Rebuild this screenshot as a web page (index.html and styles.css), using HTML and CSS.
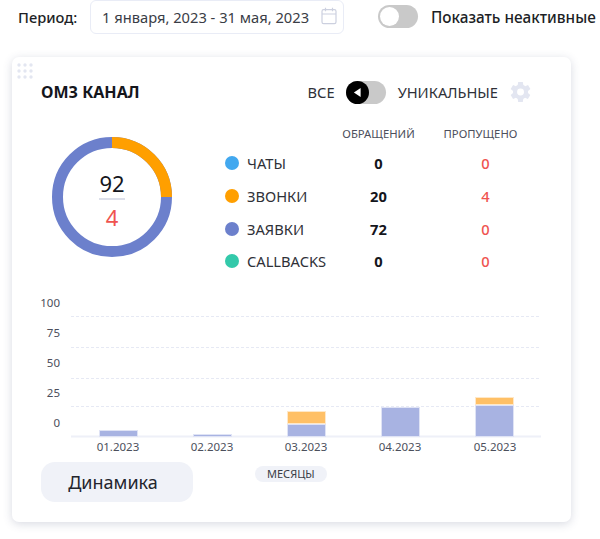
FILE: index.html
```html
<!DOCTYPE html>
<html lang="ru">
<head>
<meta charset="utf-8">
<title>Статистика</title>
<link rel="stylesheet" href="styles.css">
</head>
<body>
<header class="filters">
  <span class="period-label">Период:</span>
  <div class="date-input">
    <span>1 января, 2023 - 31 мая, 2023</span>
    <svg class="cal" viewBox="0 0 16 18" width="16" height="18" fill="none" stroke="#ccd0df" stroke-width="1.2"><rect x="1" y="2.6" width="14" height="14" rx="1.6"/><path d="M1 7h14M4.5 .8v3.4M11.5 .8v3.4"/></svg>
  </div>
  <div class="switch"><span class="knob"></span></div>
  <span class="inactive-label">Показать неактивные</span>
</header>
<main class="card">
  <svg class="grip" viewBox="0 0 16 16" width="16" height="16" fill="#e3e6f1"><circle cx="2" cy="2" r="1.7"/><circle cx="8" cy="2" r="1.7"/><circle cx="14" cy="2" r="1.7"/><circle cx="2" cy="8" r="1.7"/><circle cx="8" cy="8" r="1.7"/><circle cx="14" cy="8" r="1.7"/><circle cx="2" cy="14" r="1.7"/><circle cx="8" cy="14" r="1.7"/><circle cx="14" cy="14" r="1.7"/></svg>
  <div class="card-head">
    <h2>ОМЗ КАНАЛ</h2>
    <div class="mode">
      <span>ВСЕ</span>
      <div class="switch small"><span class="knob dark"><svg viewBox="0 0 10 12" width="9" height="11"><path d="M8.500 1v10L1 6z" fill="#fff"/></svg></span></div>
      <span>УНИКАЛЬНЫЕ</span>
      <svg class="gear" viewBox="0 0 24 24" width="26" height="26"><path fill="#e3e6f1" d="M19.400 13a7.600 7.600 0 0 0 0-2l2.200-1.700-2.200-3.700-2.600 1a7.600 7.600 0 0 0-1.700-1L14.600 2.800h-4.300L9.900 5.600a7.600 7.600 0 0 0-1.700 1l-2.600-1-2.200 3.700L5.600 11a7.600 7.600 0 0 0 0 2l-2.200 1.700 2.200 3.700 2.600-1c.5.400 1.100.700 1.700 1l.4 2.800h4.300l.4-2.800c.6-.3 1.200-.6 1.700-1l2.600 1 2.200-3.700zM12.500 15.200a3.200 3.200 0 1 1 0-6.400 3.200 3.200 0 0 1 0 6.400z"/></svg>
    </div>
  </div>
  <div class="summary">
    <div class="donut">
      <svg viewBox="0 0 120 120" width="120" height="120" fill="none" stroke-width="11">
        <circle cx="60" cy="60" r="54.500" stroke="#6c80cc"/>
        <path d="M60 5.500A54.500 54.500 0 0 1 114.500 60" stroke="#ff9f00"/>
      </svg>
      <div class="donut-text">
        <span class="total">92</span>
        <span class="missed">4</span>
      </div>
    </div>
    <div class="legend">
      <span></span><span class="th">ОБРАЩЕНИЙ</span><span class="th th-missed">ПРОПУЩЕНО</span>
      <span class="name"><i class="dot chats"></i>ЧАТЫ</span><b>0</b><span class="red">0</span>
      <span class="name"><i class="dot calls"></i>ЗВОНКИ</span><b>20</b><span class="red">4</span>
      <span class="name"><i class="dot orders"></i>ЗАЯВКИ</span><b>72</b><span class="red">0</span>
      <span class="name"><i class="dot cb"></i>CALLBACKS</span><b>0</b><span class="red">0</span>
    </div>
  </div>
  <svg class="chart" viewBox="0 0 558 165" width="558" height="165">
    <g class="grid-lines">
      <path d="M59 23.500H529M59 54.500H529M59 85.500H529M59 113.500H529"/>
    </g>
    <path class="axis" d="M59 143.500H529"/>
    <g class="ylab">
      <text x="48" y="14">100</text><text x="48" y="44">75</text><text x="48" y="74">50</text><text x="48" y="104">25</text><text x="48" y="134">0</text>
    </g>
    <g class="bar-b">
      <rect x="87.500" y="137.500" width="38" height="6"/>
      <rect x="181.500" y="141.500" width="38" height="2"/>
      <rect x="275.500" y="131.500" width="38" height="12"/>
      <rect x="369.500" y="114.500" width="38" height="29"/>
      <rect x="463.500" y="112.500" width="38" height="31"/>
    </g>
    <g class="bar-o">
      <rect x="275.500" y="118.500" width="38" height="12"/>
      <rect x="463.500" y="104.500" width="38" height="7"/>
    </g>
    <g class="xlab">
      <text x="106" y="158">01.2023</text><text x="200" y="158">02.2023</text><text x="294" y="158">03.2023</text><text x="388" y="158">04.2023</text><text x="483" y="158">05.2023</text>
    </g>
  </svg>
  <div class="card-foot">
    <button class="dyn">Динамика</button>
    <span class="pill">МЕСЯЦЫ</span>
  </div>
</main>
</body>
</html>
```
FILE: styles.css
```css
* { box-sizing: border-box; }
html, body { margin: 0; padding: 0; }
body {
  width: 600px;
  height: 539px;
  overflow: hidden;
  background: #fff;
  font-family: "Noto Sans", "Open Sans", sans-serif;
  color: #1d1f26;
}
.filters {
  display: flex;
  align-items: center;
  height: 34px;
  padding-left: 18px;
}
.period-label { font-size: 14.700px; font-weight: 500; width: 72px; }
.date-input {
  width: 254px;
  height: 34px;
  border: 1px solid #e9ecf6;
  border-radius: 6px;
  display: flex;
  align-items: center;
  justify-content: space-between;
  padding: 0 6px 0 11px;
  font-size: 14.700px;
  color: #3a3d46;
}
.cal { margin-bottom: 3px; }
.switch {
  width: 40px;
  height: 23px;
  border-radius: 12px;
  background: #c9c9c9;
  margin-left: 35px;
  padding: 2px;
  flex: none;
}
.filters .switch { margin-left: 34px; margin-bottom: 1px; }
.knob {
  display: flex;
  align-items: center;
  justify-content: center;
  width: 19px;
  height: 19px;
  border-radius: 50%;
  background: #fff;
}
.inactive-label { font-size: 15.300px; font-weight: 500; margin-left: 13px; white-space: nowrap; }
.card {
  position: relative;
  width: 559px;
  height: 465px;
  margin: 23px 0 0 12px;
  background: #fff;
  border-radius: 7px;
  box-shadow: 0 2px 10px rgba(60, 70, 110, .2);
}
.grip { position: absolute; left: 5px; top: 6px; }
.card-head {
  display: flex;
  align-items: center;
  justify-content: space-between;
  height: 70px;
  padding: 0 38px 0 29px;
}
.card-head h2 { margin: 0; font-size: 16px; font-weight: 700; color: #14161c; }
.mode { display: flex; align-items: center; font-size: 14.700px; color: #2f3138; }
.switch.small { margin: 0 12px 0 11px; width: 40px; height: 23px; padding: 0; }
.knob.dark { background: #000; width: 23px; height: 23px; }
.gear { margin-left: 9px; }
.summary { display: flex; height: 155px; }
.donut { position: relative; width: 120px; height: 120px; margin: 10px 0 0 40px; }
.donut-text {
  position: absolute;
  left: 47px;
  top: 32px;
  width: 26px;
  display: flex;
  flex-direction: column;
  align-items: center;
}
.total {
  font-size: 22px;
  line-height: 28px;
  width: 100%;
  text-align: center;
  color: #14161c;
  border-bottom: 2px solid #dcdfea;
  height: 31px;
}
.missed { font-size: 22px; line-height: 34px; color: #ef5350; }
.legend {
  display: grid;
  grid-template-columns: 100px 107px 107px;
  grid-template-rows: 21px repeat(4, 32.700px);
  margin: -1px 0 0 53px;
  font-size: 14.700px;
  align-items: center;
  justify-items: center;
}
.th { font-size: 11.300px; color: #4c4f5c; align-self: start; line-height: 15px; white-space: nowrap; }
.th-missed { margin-right: 10px; }
.legend b { font-weight: 700; color: #14161c; }
.red { color: #ef5350; font-weight: 500; }
.name { justify-self: start; display: flex; align-items: center; color: #2f3138; white-space: nowrap; }
.dot { width: 14px; height: 14px; border-radius: 50%; margin-right: 8px; flex: none; }
.chats { background: #42a8ef; }
.calls { background: #ff9f00; }
.orders { background: #6c80cc; }
.cb { background: #33c9aa; }
.chart { display: block; margin-top: 11px; }
.grid-lines path { stroke: #e6e9f4; stroke-width: 1; stroke-dasharray: 3 2; fill: none; }
.axis { stroke: #eef0f8; stroke-width: 2; fill: none; }
.ylab text { font-size: 11.500px; fill: #4c4f5c; text-anchor: end; }
.xlab text { font-size: 11.500px; fill: #4c4f5c; text-anchor: middle; }
.bar-b rect { fill: #a8b3e2; stroke: #dfe3f5; stroke-width: 1; }
.bar-o rect { fill: #ffc066; stroke: #ffe8c8; stroke-width: 1; }
.card-foot {
  display: flex;
  align-items: flex-start;
  padding-left: 29px;
  margin-top: 4px;
}
.dyn {
  width: 152px;
  height: 40px;
  padding: 0 8px 0 0;
  border: 0;
  border-radius: 14px;
  background: #f0f2f8;
  font: 18px "Noto Sans", "Open Sans", sans-serif;
  color: #23252d;
}
.pill {
  margin: 4px 0 0 62px;
  height: 16px;
  padding: 0 12px;
  border-radius: 8px;
  background: #f0f2f8;
  font-size: 11px;
  line-height: 16px;
  color: #3a3d46;
}
```
